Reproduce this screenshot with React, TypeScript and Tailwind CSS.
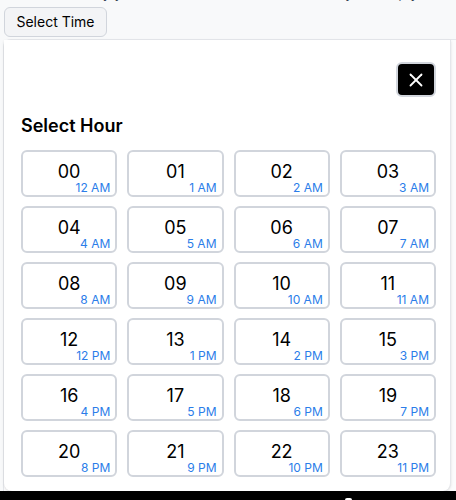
import { X } from 'lucide-react';

const hours = Array.from({ length: 24 }, (_, h) => {
  const label = h === 0 ? '12 AM' : h < 12 ? `${h} AM` : h === 12 ? '12 PM' : `${h - 12} PM`;
  return { value: String(h).padStart(2, '0'), label };
});

export default function App() {
  return (
    <div className="h-[500px] w-[456px] overflow-hidden bg-[#f8f9fa] font-['Inter',sans-serif] text-black">
      {/* page content peeking above the modal */}
      <p className="-mt-[17px] h-[22px] pl-[20px] text-sm leading-5 text-gray-700 whitespace-nowrap">
        Choose a day you are free to meet (we will email you a reply)
      </p>
      <div className="flex pl-[4px] pt-[2px]">
        <button className="h-[30px] w-[103px] rounded-md border border-gray-300 bg-[#f3f4f6] text-sm">
          Select Time
        </button>
      </div>

      <div className="ml-[3px] mt-[2px] w-[460px] rounded-tl-lg border-l border-t border-gray-200 bg-[#fbfbfc]">
        <div className="flex h-[451px] w-[447px] flex-col rounded-b-lg border-r border-gray-200 bg-white pl-[17px] pr-[14px] pt-[22px] shadow-sm">
          <div className="flex justify-end">
            <button className="flex h-[35px] w-[40px] items-center justify-center rounded-md border-2 border-gray-300 bg-black">
              <X className="h-[22px] w-[22px] text-white" strokeWidth={2} />
            </button>
          </div>

          <h2 className="mt-[15px] text-lg font-semibold leading-7">Select Hour</h2>

          <div className="mt-[10px] grid grid-cols-4 gap-x-[10px] gap-y-[9px]">
            {hours.map(h => (
              <button
                key={h.value}
                className="relative flex h-[47px] justify-center rounded-md border-2 border-gray-300 bg-white pt-[6px]"
              >
                <span className="text-lg leading-7">{h.value}</span>
                <span className="absolute bottom-[1px] right-[5px] text-xs leading-none text-[#2b7de9]">
                  {h.label}
                </span>
              </button>
            ))}
          </div>
        </div>
      </div>

      <div className="relative h-[10px] bg-black">
        <span className="absolute left-[345px] top-[7px] h-[4px] w-[7px] rounded-full bg-white" />
      </div>
    </div>
  );
}
